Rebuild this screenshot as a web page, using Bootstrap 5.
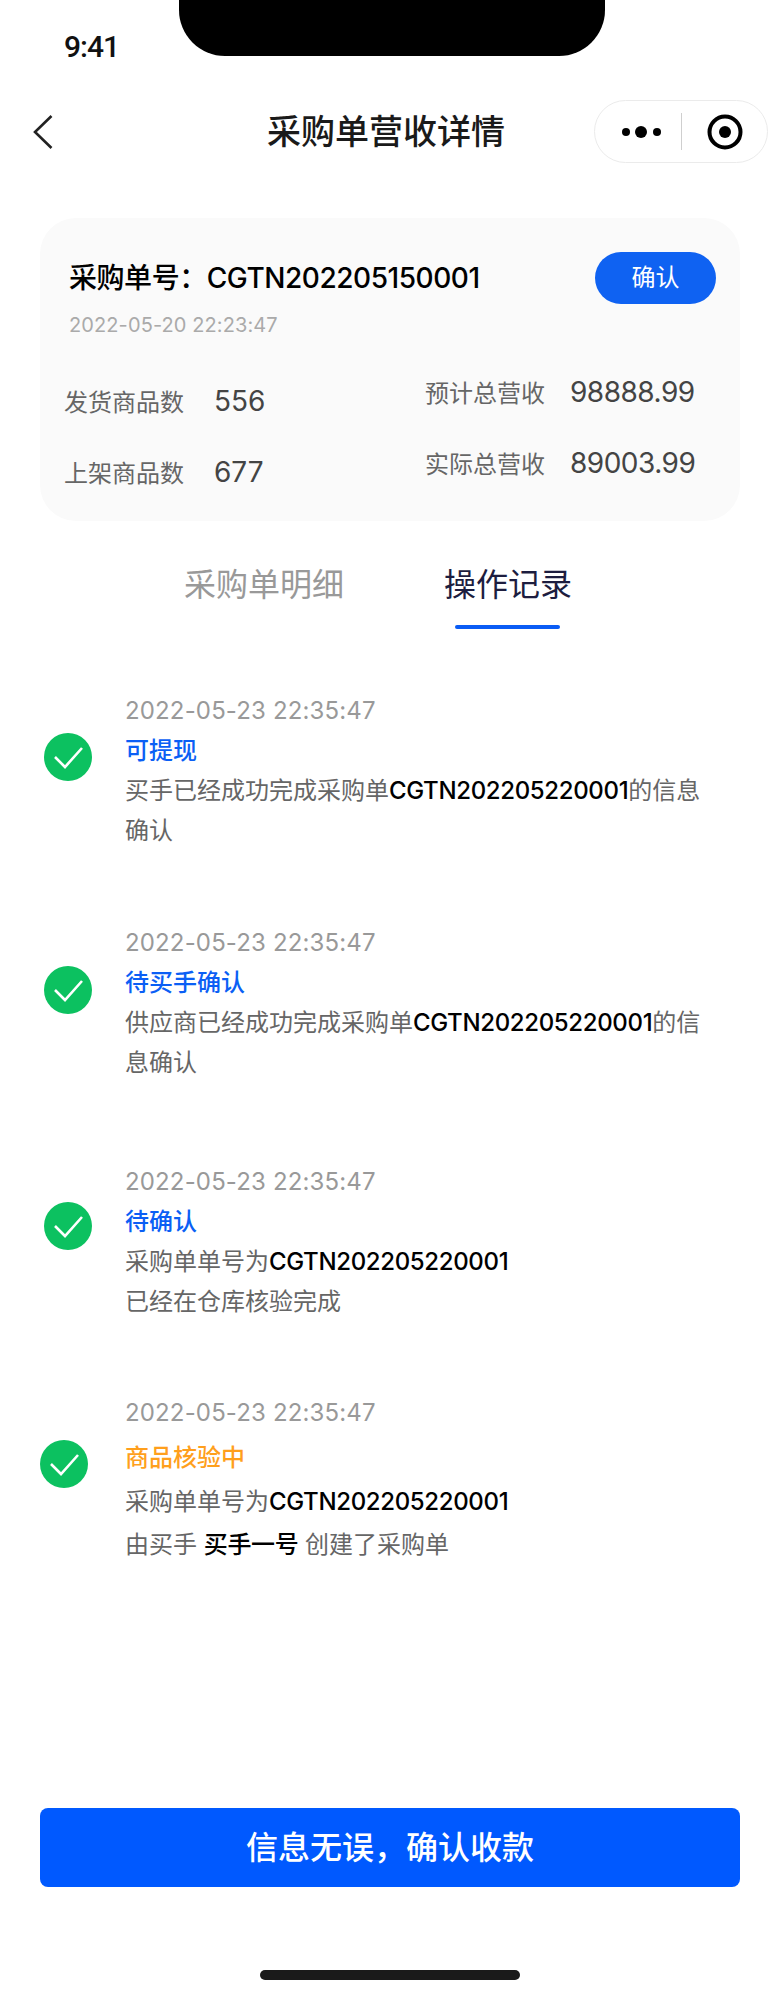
<!DOCTYPE html>
<html lang="zh-CN">
<head>
  <meta charset="UTF-8">
  <title>采购单营收详情</title>
  <meta name="viewport" content="width=device-width, initial-scale=1">
  <link href="https://cdn.jsdelivr.net/npm/bootstrap@5.3.0/dist/css/bootstrap.min.css" rel="stylesheet">
  <style>
    body { width: 780px; height: 1996px; background: #fff; overflow: hidden; font-family: "Inter", "Noto Sans CJK SC", sans-serif; color: #666; }
    .phone-page { height: 1996px; }
    .status-row { height: 56px; }
    .status-time { width: 115px; margin-left: 64px; padding-top: 30px; font-size: 30px; line-height: 34px; font-weight: 500; letter-spacing: -1px; color: #111; font-family: "Roboto", sans-serif; }
    .notch { width: 426px; height: 56px; background: #000; border-radius: 0 0 46px 46px; }
    .nav-row { margin-top: 44px; height: 63px; padding-left: 33px; padding-right: 12px; }
    .nav-title { margin-left: 214px; font-size: 34px; line-height: 63px; font-weight: 500; color: #1a1a1a; white-space: nowrap; }
    .capsule { width: 174px; height: 63px; border: 1px solid #ebebeb; border-radius: 32px; }
    .capsule-line { width: 1px; height: 37px; background: #cfcfcf; }
    .info-card { margin: 55px 40px 0; height: 303px; background: #fafafa; border-radius: 36px; border: 0; padding: 34px 24px 0 29px; }
    .order-no { margin-top: 6px; font-size: 28px; line-height: 40px; font-weight: 500; letter-spacing: -.45px; color: #000; white-space: nowrap; }
    .order-btn { width: 121px; height: 52px; padding: 0; font-size: 24px; border-radius: 26px; border: 0; background: #0f62f2; color: #fff; }
    .order-date { font-size: 20px; line-height: 28px; letter-spacing: .1px; color: #aaa; margin-top: 7px; }
    .stat-row { white-space: nowrap; line-height: 36px; }
    .stat-label { font-size: 24px; color: #666; }
    .stat-num { font-size: 28px; color: #444; }
    .stat-left { margin-left: -5px; width: 361px; padding-top: 44px; }
    .stat-right { padding-top: 35px; }
    .stat-gap { row-gap: 31px; }
    .stat-left .stat-num { margin-left: 30px; }
    .stat-right .stat-num { margin-left: 25px; letter-spacing: -.5px; }
    .tab-row { margin-top: 42px; padding-left: 184px; gap: 100px; height: 88px; }
    .tab-item { font-size: 32px; line-height: 44px; color: #999; white-space: nowrap; position: relative; }
    .tab-on { color: #1d1d3f; }
    .tab-bar { position: absolute; left: 11px; right: 12px; top: 62px; height: 4px; border-radius: 2px; background: #0a5cf5; }
    .log-item { display: flex; width: 700px; margin-left: 44px; }
    .log-icon { width: 48px; height: 48px; flex: none; margin-right: 33px; }
    .log-body { width: 580px; font-size: 24px; line-height: 40px; color: #666; white-space: nowrap; }
    .log-date { color: #999; letter-spacing: .15px; }
    .log-blue { color: #0b5ff5; font-weight: 500; }
    .log-orange { color: #ff9f1c; font-weight: 500; }
    .log-body b { font-weight: 500; color: #000; letter-spacing: -.35px; }
    .first-item { margin-top: 40px; }
    .first-item .log-icon { margin-top: 42px; }
    .second-item { margin-top: 72px; }
    .second-item .log-icon { margin-top: 43px; }
    .third-item { margin-top: 79px; }
    .third-item .log-icon { margin-top: 40px; }
    .last-item { margin-top: 71px; margin-left: 40px; }
    .last-item .log-icon { margin-top: 47px; margin-right: 37px; }
    .last-item .log-title { margin: 5px 0 4px; }
    .last-item .log-line { margin-top: 3px; }
    .pay-btn { width: 700px; height: 79px; margin: auto 40px 0; padding: 0; border: 0; border-radius: 8px; background: #0059ff; color: #fff; font-size: 32px; font-weight: 500; }
    .home-bar { width: 260px; height: 10px; margin: 83px auto 16px; background: #1a1a1a; border-radius: 5px; }
  </style>
</head>
<body>
  <div class="phone-page d-flex flex-column">
    <!-- status bar -->
    <div class="status-row d-flex">
      <div class="status-time">9:41</div>
      <div class="notch"></div>
    </div>

    <!-- title bar -->
    <div class="nav-row d-flex align-items-center">
      <svg width="20" height="34" viewBox="0 0 20 34"><path d="M18.5 1 L2 17 L18.5 33" fill="none" stroke="#222" stroke-width="2.6"/></svg>
      <div class="nav-title">采购单营收详情</div>
      <div class="capsule ms-auto d-flex align-items-center">
        <svg class="ms-4" width="46" height="16" viewBox="0 0 46 16"><circle cx="7" cy="8" r="4" fill="#000"/><circle cx="22" cy="8" r="6" fill="#000"/><circle cx="38" cy="8" r="4" fill="#000"/></svg>
        <div class="capsule-line ms-3"></div>
        <svg class="ms-4" width="38" height="38" viewBox="0 0 38 38"><circle cx="19" cy="19" r="15.5" fill="none" stroke="#000" stroke-width="4"/><circle cx="19" cy="19" r="6" fill="#000"/></svg>
      </div>
    </div>

    <!-- order summary -->
    <div class="info-card card">
      <div class="d-flex justify-content-between align-items-start">
        <div class="order-no">采购单号：CGTN202205150001</div>
        <button class="btn order-btn" type="button">确认</button>
      </div>
      <div class="order-date">2022-05-20 22:23:47</div>
      <div class="d-flex">
        <div class="stat-left d-flex flex-column stat-gap">
          <div class="stat-row"><span class="stat-label">发货商品数</span><span class="stat-num">556</span></div>
          <div class="stat-row"><span class="stat-label">上架商品数</span><span class="stat-num">677</span></div>
        </div>
        <div class="stat-right d-flex flex-column stat-gap">
          <div class="stat-row"><span class="stat-label">预计总营收</span><span class="stat-num">98888.99</span></div>
          <div class="stat-row"><span class="stat-label">实际总营收</span><span class="stat-num">89003.99</span></div>
        </div>
      </div>
    </div>

    <!-- tabs -->
    <div class="tab-row d-flex">
      <div class="tab-item">采购单明细</div>
      <div class="tab-item tab-on">操作记录<span class="tab-bar"></span></div>
    </div>

    <!-- records -->
    <div class="log-item first-item">
      <svg class="log-icon" viewBox="0 0 48 48"><circle cx="24" cy="24" r="24" fill="#0cc160"/><path d="M11 24 L21 34 L38 15" fill="none" stroke="#fff" stroke-width="2.6"/></svg>
      <div class="log-body">
        <div class="log-date">2022-05-23 22:35:47</div>
        <div class="log-blue">可提现</div>
        <div>买手已经成功完成采购单<b>CGTN202205220001</b>的信息</div>
        <div>确认</div>
      </div>
    </div>
    <div class="log-item second-item">
      <svg class="log-icon" viewBox="0 0 48 48"><circle cx="24" cy="24" r="24" fill="#0cc160"/><path d="M11 24 L21 34 L38 15" fill="none" stroke="#fff" stroke-width="2.6"/></svg>
      <div class="log-body">
        <div class="log-date">2022-05-23 22:35:47</div>
        <div class="log-blue">待买手确认</div>
        <div>供应商已经成功完成采购单<b>CGTN202205220001</b>的信</div>
        <div>息确认</div>
      </div>
    </div>
    <div class="log-item third-item">
      <svg class="log-icon" viewBox="0 0 48 48"><circle cx="24" cy="24" r="24" fill="#0cc160"/><path d="M11 24 L21 34 L38 15" fill="none" stroke="#fff" stroke-width="2.6"/></svg>
      <div class="log-body">
        <div class="log-date">2022-05-23 22:35:47</div>
        <div class="log-blue">待确认</div>
        <div>采购单单号为<b>CGTN202205220001</b></div>
        <div>已经在仓库核验完成</div>
      </div>
    </div>
    <div class="log-item last-item">
      <svg class="log-icon" viewBox="0 0 48 48"><circle cx="24" cy="24" r="24" fill="#0cc160"/><path d="M11 24 L21 34 L38 15" fill="none" stroke="#fff" stroke-width="2.6"/></svg>
      <div class="log-body">
        <div class="log-date">2022-05-23 22:35:47</div>
        <div class="log-orange log-title">商品核验中</div>
        <div>采购单单号为<b>CGTN202205220001</b></div>
        <div class="log-line">由买手 <b>买手一号</b> 创建了采购单</div>
      </div>
    </div>

    <button class="btn pay-btn" type="button">信息无误，确认收款</button>
    <div class="home-bar"></div>
  </div>
  <script src="https://cdn.jsdelivr.net/npm/bootstrap@5.3.0/dist/js/bootstrap.bundle.min.js"></script>
</body>
</html>
